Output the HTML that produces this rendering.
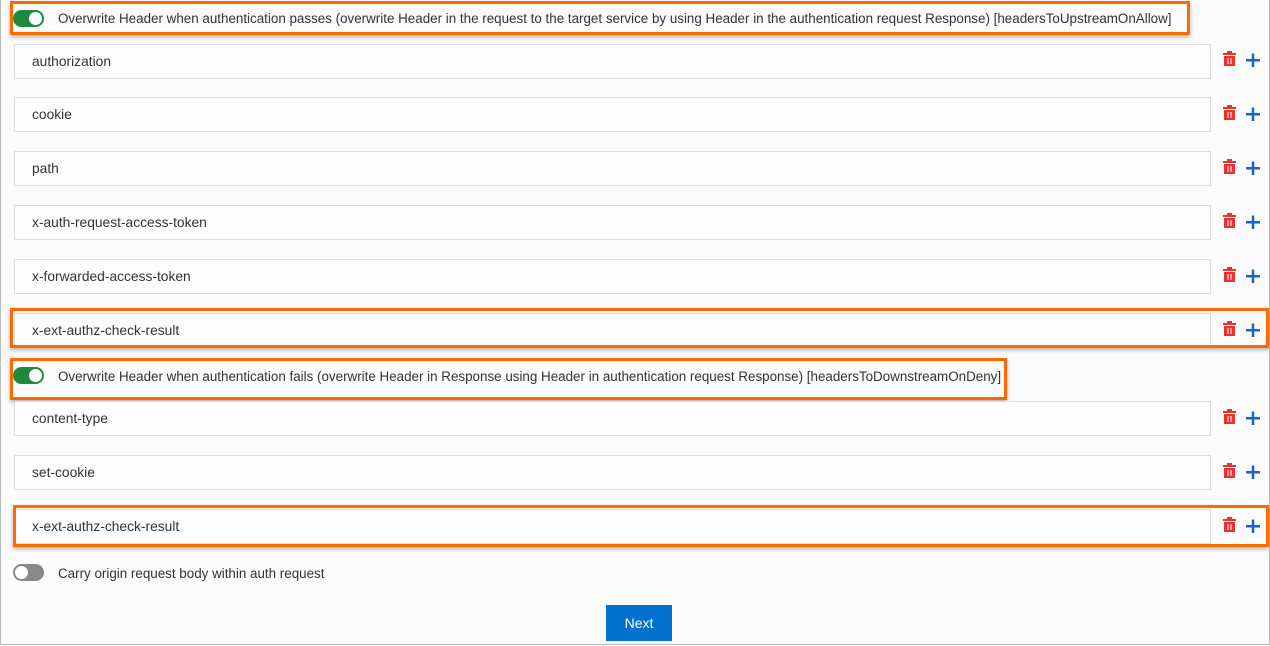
<!DOCTYPE html>
<html><head><style>
body{margin:0;width:1270px;height:646px;background:#fbfbfb;font-family:"Liberation Sans",sans-serif;font-size:13.4px;color:#333;position:relative;overflow:hidden}
.frame{position:absolute;left:0;top:0;width:1268px;height:644px;border:1px solid #b8b8b8;border-top:none}
.inp{position:absolute;left:14px;width:1197px;height:35px;border:1px solid #dcdcdc;background:#fdfdfd;box-sizing:border-box;padding-left:17px;line-height:33px;font-size:13.8px}
.ob{position:absolute;border:3px solid #ff6a00;box-sizing:border-box;box-shadow:0 2px 4px rgba(0,0,0,.3)}
.tg{position:absolute;left:13px;width:31px;height:17px;border-radius:9px;background:#1f8a3b}
.tg::after{content:"";position:absolute;right:2px;top:2px;width:13px;height:13px;border-radius:50%;background:#fff}
.tg.off{background:#888}.tg.off::after{left:2px;right:auto}
.lbl{position:absolute;left:58px}
</style></head><body>
<div class="frame"></div>
<div class="tg" style="top:10px"></div>
<div class="lbl" style="top:11px">Overwrite Header when authentication passes (overwrite Header in the request to the target service by using Header in the authentication request Response) [headersToUpstreamOnAllow]</div>
<div class="ob" style="left:10px;top:1px;width:1180px;height:34px"></div>

<div class="inp" style="top:44px">authorization</div>
<div class="inp" style="top:97px">cookie</div>
<div class="inp" style="top:151px">path</div>
<div class="inp" style="top:205px">x-auth-request-access-token</div>
<div class="inp" style="top:259px">x-forwarded-access-token</div>
<div class="inp" style="top:313px">x-ext-authz-check-result</div>
<div class="ob" style="left:10px;top:308px;width:1259px;height:40px"></div>

<div class="tg" style="top:367px"></div>
<div class="lbl" style="top:369px">Overwrite Header when authentication fails (overwrite Header in Response using Header in authentication request Response) [headersToDownstreamOnDeny]</div>
<div class="ob" style="left:10px;top:358px;width:997px;height:42px"></div>

<div class="inp" style="top:401px">content-type</div>
<div class="inp" style="top:455px">set-cookie</div>
<div class="inp" style="top:509px">x-ext-authz-check-result</div>
<div class="ob" style="left:13px;top:505px;width:1256px;height:42px"></div>

<div class="tg off" style="top:564px"></div>
<div class="lbl" style="top:566px">Carry origin request body within auth request</div>
<div style="position:absolute;left:606px;top:605px;width:66px;height:36px;background:#0070cc;color:#fff;text-align:center;line-height:36px;font-size:14px">Next</div>

<svg width="1270" height="646" style="position:absolute;left:0;top:0" >
<g id="r">
<g fill="#e8322f"><rect x="1223" y="53" width="13" height="2"/><rect x="1227" y="51" width="5" height="2"/><rect x="1224" y="56" width="11" height="10"/></g>
<g fill="#f99"><rect x="1227" y="58" width="2" height="6"/><rect x="1230" y="58" width="2" height="6"/></g>
<g fill="#1a63c7"><rect x="1246" y="59" width="14" height="2.5"/><rect x="1251.75" y="53.5" width="2.5" height="13.5"/></g>
</g>
<use href="#r" y="54"/><use href="#r" y="108"/><use href="#r" y="162"/><use href="#r" y="216"/><use href="#r" y="270"/>
<use href="#r" y="358"/><use href="#r" y="412"/><use href="#r" y="466"/>
</svg>
</body></html>
